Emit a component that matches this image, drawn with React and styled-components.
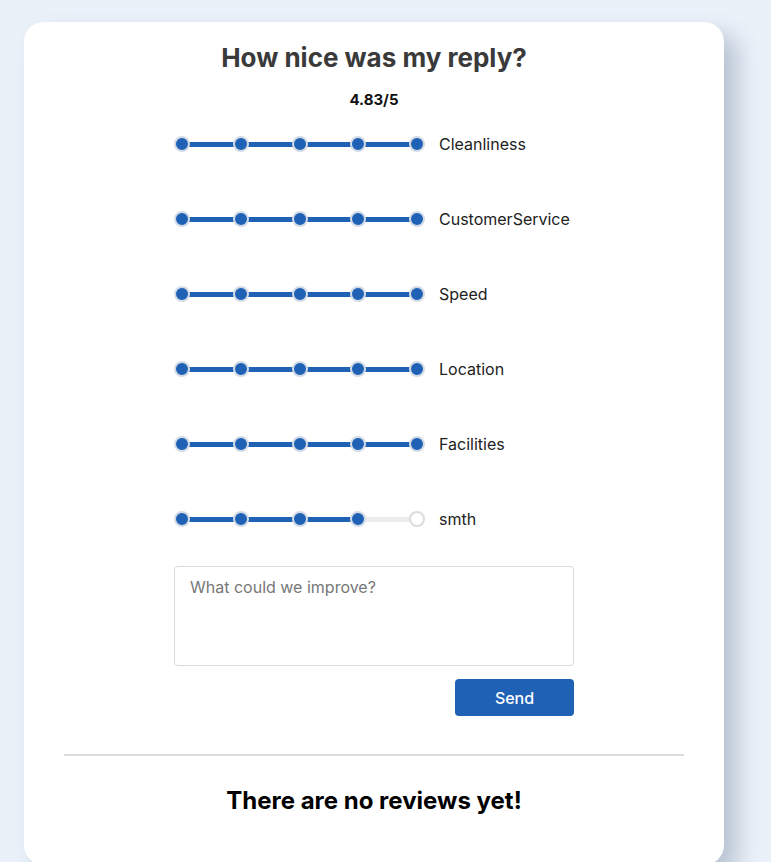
import React, { useState } from "react";
import styled, { createGlobalStyle } from "styled-components";

const GlobalStyle = createGlobalStyle`
  body {
    margin: 0;
    background: #eaf1f9;
    font-family: Inter, "Noto Sans", sans-serif;
  }
`;

const Page = styled.div`
  padding: 22px 47px 0 24px;
`;

const Card = styled.div`
  background: #fff;
  border-radius: 20px;
  box-shadow: 14px 12px 22px rgba(60, 80, 110, 0.28);
  padding: 20px 40px 50px;
  display: flex;
  flex-direction: column;
  align-items: center;
`;

const Title = styled.h2`
  margin: 0;
  font-size: 26px;
  font-weight: 700;
  color: #3a3a3a;
  line-height: 32px;
`;

const Score = styled.div`
  margin-top: 16px;
  font-size: 15px;
  font-weight: 700;
  color: #111;
`;

const Form = styled.div`
  width: 400px;
  display: flex;
  flex-direction: column;
  margin-top: 25px;
`;

const Rows = styled.div`
  display: flex;
  flex-direction: column;
  gap: 55px;
`;

const Row = styled.div`
  display: flex;
  align-items: center;
  height: 20px;
`;

const Slider = styled.div`
  position: relative;
  width: 251px;
  height: 20px;
  display: flex;
  align-items: center;
  justify-content: space-between;
  cursor: pointer;
`;

const Track = styled.div`
  position: absolute;
  left: 7px;
  right: 7px;
  top: 8px;
  height: 5px;
  background: #ececec;
`;

const Fill = styled.div`
  height: 100%;
  background: #1f62b5;
`;

const Dot = styled.span`
  position: relative;
  width: 12px;
  height: 12px;
  border-radius: 50%;
  background: ${(p) => (p.$on ? "#1f62b5" : "#fff")};
  border: 2px solid ${(p) => (p.$on ? "#d3dbe6" : "#dcdcdc")};
`;

const Label = styled.span`
  margin-left: 14px;
  font-size: 16px;
  color: #222;
`;

const TextArea = styled.textarea`
  margin-top: 37px;
  height: 100px;
  box-sizing: border-box;
  border: 1px solid #dadada;
  border-radius: 4px;
  padding: 10px 15px;
  font-family: Inter, sans-serif;
  font-size: 16px;
  resize: none;
  outline: none;
  &::placeholder {
    color: #777;
  }
`;

const Actions = styled.div`
  display: flex;
  justify-content: flex-end;
  margin-top: 13px;
`;

const Button = styled.button`
  width: 119px;
  height: 37px;
  border: none;
  border-radius: 4px;
  background: #1f62b5;
  color: #fff;
  font-family: Inter, sans-serif;
  font-size: 16px;
  font-weight: 500;
`;

const Divider = styled.hr`
  align-self: stretch;
  border: none;
  border-top: 2px solid #dcdcdc;
  margin: 38px 0 0;
`;

const Empty = styled.h3`
  margin: 30px 0 0;
  font-size: 24px;
  font-weight: 700;
  color: #000;
`;

const categories = [
  ["Cleanliness", 5],
  ["CustomerService", 5],
  ["Speed", 5],
  ["Location", 5],
  ["Facilities", 5],
  ["smth", 4],
];

const Rating = ({ name, initial }) => {
  const [value, setValue] = useState(initial);
  return (
    <Row>
      <Slider>
        <Track>
          <Fill style={{ width: `${((value - 1) / 4) * 100}%` }} />
        </Track>
        {[1, 2, 3, 4, 5].map((n) => (
          <Dot key={n} $on={n <= value} onClick={() => setValue(n)} />
        ))}
      </Slider>
      <Label>{name}</Label>
    </Row>
  );
};

export default function App() {
  return (
    <Page>
      <GlobalStyle />
      <Card>
        <Title>How nice was my reply?</Title>
        <Score>4.83/5</Score>
        <Form>
          <Rows>
            {categories.map(([name, v]) => (
              <Rating key={name} name={name} initial={v} />
            ))}
          </Rows>
          <TextArea placeholder="What could we improve?" />
          <Actions>
            <Button>Send</Button>
          </Actions>
        </Form>
        <Divider />
        <Empty>There are no reviews yet!</Empty>
      </Card>
    </Page>
  );
}
